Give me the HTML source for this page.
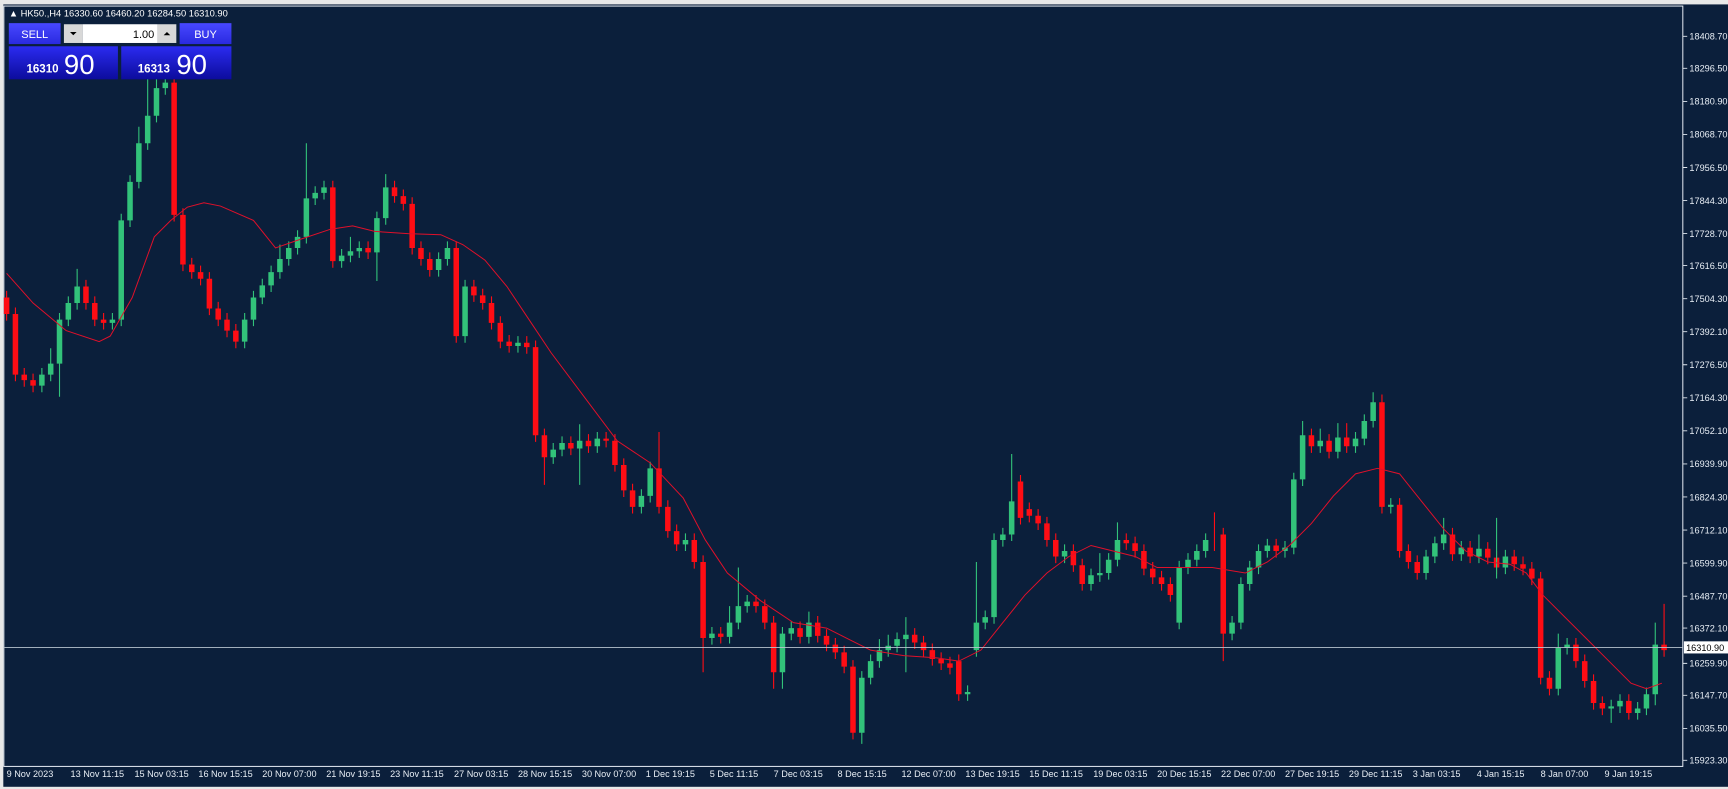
<!DOCTYPE html>
<html><head><meta charset="utf-8"><style>
html,body{margin:0;padding:0;background:#0b1f3b;overflow:hidden}
svg{display:block}
text{font-family:"Liberation Sans",sans-serif}
</style></head><body>
<svg width="1728" height="789" viewBox="0 0 1568 716" preserveAspectRatio="none" xmlns="http://www.w3.org/2000/svg">
<defs>
<linearGradient id="b1" x1="0" y1="0" x2="0" y2="1"><stop offset="0" stop-color="#4848ff"/><stop offset="1" stop-color="#2a2ae0"/></linearGradient>
<linearGradient id="b2" x1="0" y1="0" x2="0" y2="1"><stop offset="0" stop-color="#2b2bf0"/><stop offset="1" stop-color="#0c0c9c"/></linearGradient>
</defs>
<rect x="0" y="0" width="1568" height="716" fill="#0b1f3b"/>
<rect x="0" y="0" width="1568" height="4" fill="#e8e8e8"/>
<rect x="0" y="0" width="3" height="716" fill="#e8e8e8"/>
<rect x="0" y="714" width="1568" height="2" fill="#e8e8e8"/>
<rect x="3.5" y="5.5" width="1523.5" height="690" fill="none" stroke="#e8eef5" stroke-width="0.9"/>

<g font-size="8.3" fill="#e8eef5">
<text x="1533" y="36">18408.70</text><text x="1533" y="65">18296.50</text><text x="1533" y="95">18180.90</text><text x="1533" y="125">18068.70</text><text x="1533" y="155">17956.50</text><text x="1533" y="185">17844.30</text><text x="1533" y="215">17728.70</text><text x="1533" y="244">17616.50</text><text x="1533" y="274">17504.30</text><text x="1533" y="304">17392.10</text><text x="1533" y="334">17276.50</text><text x="1533" y="364">17164.30</text><text x="1533" y="394">17052.10</text><text x="1533" y="424">16939.90</text><text x="1533" y="454">16824.30</text><text x="1533" y="484">16712.10</text><text x="1533" y="514">16599.90</text><text x="1533" y="544">16487.70</text><text x="1533" y="573">16372.10</text><text x="1533" y="605">16259.90</text><text x="1533" y="634">16147.70</text><text x="1533" y="664">16035.50</text><text x="1533" y="693">15923.30</text>
</g>
<path d="M1527 33h4M1527 62h4M1527 92h4M1527 122h4M1527 152h4M1527 182h4M1527 212h4M1527 241h4M1527 271h4M1527 301h4M1527 331h4M1527 361h4M1527 391h4M1527 421h4M1527 451h4M1527 481h4M1527 511h4M1527 541h4M1527 570h4M1527 602h4M1527 631h4M1527 661h4M1527 690h4" stroke="#dfe6ee" stroke-width="0.8"/>

<g font-size="8.3" fill="#e8eef5">
<text x="6" y="705">9 Nov 2023</text><text x="64" y="705">13 Nov 11:15</text><text x="122" y="705">15 Nov 03:15</text><text x="180" y="705">16 Nov 15:15</text><text x="238" y="705">20 Nov 07:00</text><text x="296" y="705">21 Nov 19:15</text><text x="354" y="705">23 Nov 11:15</text><text x="412" y="705">27 Nov 03:15</text><text x="470" y="705">28 Nov 15:15</text><text x="528" y="705">30 Nov 07:00</text><text x="586" y="705">1 Dec 19:15</text><text x="644" y="705">5 Dec 11:15</text><text x="702" y="705">7 Dec 03:15</text><text x="760" y="705">8 Dec 15:15</text><text x="818" y="705">12 Dec 07:00</text><text x="876" y="705">13 Dec 19:15</text><text x="934" y="705">15 Dec 11:15</text><text x="992" y="705">19 Dec 03:15</text><text x="1050" y="705">20 Dec 15:15</text><text x="1108" y="705">22 Dec 07:00</text><text x="1166" y="705">27 Dec 19:15</text><text x="1224" y="705">29 Dec 11:15</text><text x="1282" y="705">3 Jan 03:15</text><text x="1340" y="705">4 Jan 15:15</text><text x="1398" y="705">8 Jan 07:00</text><text x="1456" y="705">9 Jan 19:15</text>
</g>

<!-- red candles -->
<path stroke="#ff0d14" stroke-width="1" fill="none" d="M6 264V291M14 279V346M22 334V351M30 339V356M78 254V281M86 269V296M94 284V299M158 68V201M166 189V246M174 234V253M182 241V259M190 247V286M198 274V296M206 284V306M214 294V316M302 164V243M334 219V235M358 164V184M366 172V191M374 179V231M382 219V241M390 229V251M414 219V311M430 254V274M438 262V281M446 269V299M454 287V316M462 304V320M478 305V321M486 309V401M494 389V440M518 396V413M534 394V411M550 392V406M558 394V428M566 416V451M574 439V466M598 392V466M606 454V488M614 476V500M630 484V516M638 504V610M654 569V584M686 540V556M694 544V571M702 559V625M726 564V584M742 559V583M750 571V591M758 579V598M766 586V611M774 599V671M830 570V589M838 577V596M846 584V604M854 592V608M862 596V612M870 594V636M926 431V476M934 456V474M942 462V481M950 469V496M958 484V511M974 494V519M982 507V536M1022 484V499M1030 487V506M1038 494V522M1046 510V530M1054 518V536M1062 524V546M1102 465V500M1110 479V600M1158 489V506M1190 389V411M1206 394V416M1222 384V411M1254 358V466M1270 452V506M1278 494V516M1286 504V526M1318 479V509M1334 491V511M1350 492V512M1358 500V521M1374 499V518M1382 505V522M1390 510V531M1398 519V621M1406 609V631M1430 579V606M1438 594V624M1446 612V644M1454 632V649M1478 630V653M1510 548V596"/>
<path stroke="#ff0d14" stroke-width="5" fill="none" d="M6 270V285M14 285V340M22 340V345M30 345V350M78 260V275M86 275V290M94 290V293M158 75V195M166 195V240M174 240V247M182 247V253M190 253V280M198 280V290M206 290V300M214 300V310M302 170V237M334 225V229M358 170V178M366 178V185M374 185V225M382 225V235M390 235V245M414 225V305M430 260V268M438 268V275M446 275V293M454 293V310M462 310V314M478 311V315M486 315V395M494 395V415M518 402V407M534 400V405M550 398V400M558 400V422M566 422V445M574 445V460M598 425V460M606 460V482M614 482V494M630 490V510M638 510V579M654 575V578M686 546V550M694 550V565M702 565V610M726 570V578M742 565V577M750 577V585M758 585V592M766 592V605M774 605V665M830 576V583M838 583V590M846 590V598M854 598V602M862 602V606M870 600V630M926 437V470M934 462V468M942 468V475M950 475V490M958 490V505M974 500V513M982 513V530M1022 490V493M1030 493V500M1038 500V516M1046 516V524M1054 524V530M1062 530V540M1110 485V575M1158 495V500M1190 395V405M1206 400V410M1222 397V405M1254 365V460M1270 458V500M1278 500V510M1286 510V520M1318 485V503M1334 497V505M1350 498V506M1358 506V515M1374 505V512M1382 512V516M1390 516V525M1398 525V615M1406 615V625M1430 585V600M1438 600V618M1446 618V638M1454 638V643M1478 636V647M1510 585V590"/>
<!-- green candles -->
<path stroke="#32c27a" stroke-width="1" fill="none" d="M38 334V356M46 316V346M54 284V360M62 269V296M70 244V281M102 284V299M110 194V296M118 159V206M126 115V171M134 70V136M142 65V111M150 66V86M222 284V316M230 264V296M238 253V276M246 241V265M254 222V253M262 219V241M270 209V231M278 130V221M286 169V186M294 164V181M310 226V243M318 215V238M326 219V234M342 192V255M350 158V204M398 229V251M406 219V241M422 254V311M470 305V320M502 402V421M510 396V414M526 385V440M542 392V411M582 444V466M590 419V456M622 484V500M646 569V585M662 550V584M670 515V571M678 540V556M710 569V625M718 564V581M734 555V584M782 609V675M790 594V621M798 580V606M806 576V596M814 574V592M822 560V610M878 622V636M886 510V596M894 554V571M902 484V566M910 479V496M918 412V491M966 494V511M990 516V536M998 502V528M1006 502V526M1014 474V514M1070 509V571M1078 502V521M1086 494V514M1094 484V506M1118 559V581M1126 524V571M1134 509V536M1142 494V521M1150 489V506M1166 491V506M1174 429V503M1182 382V441M1198 389V411M1214 384V416M1230 392V411M1238 376V404M1246 356V388M1262 452V466M1294 499V526M1302 487V511M1310 470V499M1326 491V509M1342 485V511M1358 470V525M1366 499V521M1414 575V631M1422 579V594M1462 635V656M1470 630V647M1486 637V653M1494 624V649M1502 565V640"/>
<path stroke="#32c27a" stroke-width="5" fill="none" d="M38 340V350M46 330V340M54 290V330M62 275V290M70 260V275M102 290V293M110 200V290M118 165V200M126 130V165M134 105V130M142 80V105M150 75V80M222 290V310M230 270V290M238 259V270M246 247V259M254 235V247M262 225V235M270 215V225M278 180V215M286 175V180M294 170V175M310 232V237M318 228V232M326 225V228M342 198V229M350 170V198M398 235V245M406 225V235M422 260V305M470 311V314M502 408V415M510 402V408M526 400V407M542 398V405M582 450V460M590 425V450M622 490V494M646 575V579M662 565V578M670 550V565M678 546V550M710 575V610M718 570V575M734 565V578M782 615V665M790 600V615M798 590V600M806 586V590M814 580V586M822 576V580M878 628V630M886 565V590M894 560V565M902 490V560M910 485V490M918 455V485M966 500V505M990 522V530M998 520V522M1006 508V520M1014 490V508M1070 515V565M1078 508V515M1086 500V508M1094 490V500M1118 565V575M1126 530V565M1134 515V530M1142 500V515M1150 495V500M1166 497V500M1174 435V497M1182 395V435M1198 400V405M1214 397V410M1230 398V405M1238 382V398M1246 365V382M1262 458V460M1294 505V520M1302 493V505M1310 485V493M1326 497V503M1342 498V505M1366 505V515M1414 588V625M1422 585V588M1462 641V643M1470 636V641M1486 643V647M1494 630V643M1502 585V630"/>

<!-- moving average -->
<polyline fill="none" stroke="#e0102a" stroke-width="0.9" points="6,248 30,275 60,300 90,310 100,305 120,270 140,215 155,200 170,188 185,184 200,187 230,200 250,225 270,218 300,208 320,205 340,210 370,212 400,213 420,222 440,236 460,260 480,290 500,320 530,360 560,400 590,420 620,452 640,490 660,520 690,545 720,565 750,570 770,580 790,590 820,595 850,597 870,600 890,590 910,565 930,540 950,520 970,505 990,495 1010,500 1030,505 1050,515 1080,515 1100,515 1130,520 1150,510 1170,495 1190,475 1210,450 1230,430 1250,425 1270,430 1290,455 1310,480 1330,500 1350,510 1370,512 1385,520 1400,540 1420,560 1440,580 1460,600 1480,620 1494,625 1508,620"/>

<line x1="4" y1="587.5" x2="1527" y2="587.5" stroke="#b8c4cf" stroke-width="0.8"/>
<rect x="1528" y="582" width="40" height="11" fill="#fff"/><text x="1530" y="591" font-size="8.3" fill="#000">16310.90</text>

<text x="8" y="15" font-size="8.5" fill="#fff">▲ HK50.,H4  16330.60 16460.20 16284.50 16310.90</text>
<rect x="8" y="21" width="47" height="19" fill="url(#b1)"/><text x="31.5" y="34.5" font-size="10" fill="#fff" text-anchor="middle">SELL</text>
<rect x="163" y="21" width="47" height="19" fill="url(#b1)"/><text x="186.5" y="34.5" font-size="10" fill="#fff" text-anchor="middle">BUY</text>
<rect x="58" y="22" width="17" height="17" fill="#d8d8d8"/><path d="M63.5 29h6l-3 3z" fill="#000"/>
<rect x="75" y="22" width="68" height="17" fill="#fff"/><text x="140" y="34.5" font-size="10" fill="#000" text-anchor="end">1.00</text>
<rect x="143" y="22" width="17" height="17" fill="#d8d8d8"/><path d="M148.5 32h6l-3 -3z" fill="#000"/>
<rect x="8" y="42" width="99" height="30" fill="url(#b2)"/><rect x="110" y="42" width="100" height="30" fill="url(#b2)"/>
<text x="24" y="66" font-size="10.5" font-weight="bold" fill="#fff">16310</text><text x="58" y="67" font-size="25" fill="#fff">90</text>
<text x="125" y="66" font-size="10.5" font-weight="bold" fill="#fff">16313</text><text x="160" y="67" font-size="25" fill="#fff">90</text>
</svg>
</body></html>
